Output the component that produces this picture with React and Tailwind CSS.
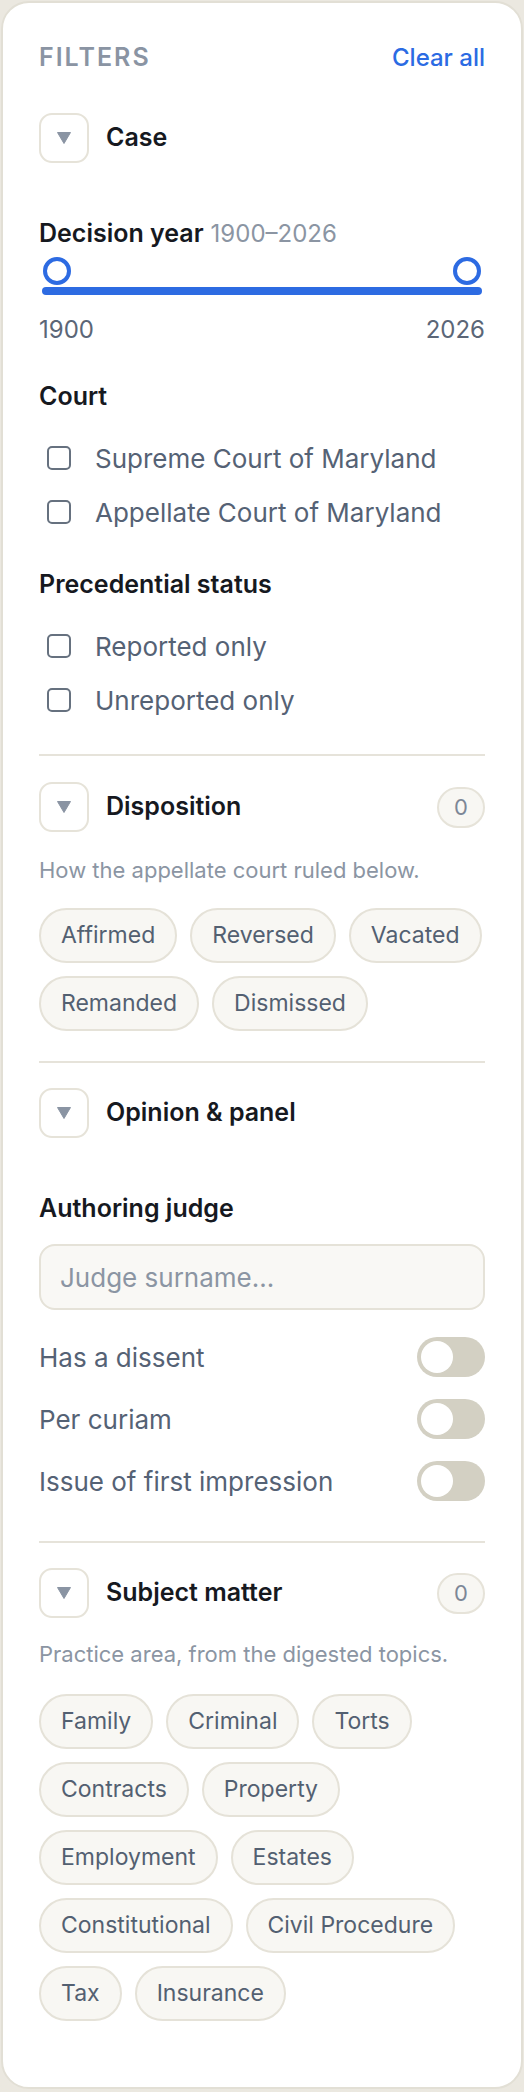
import React from 'react'

const disposition = ['Affirmed', 'Reversed', 'Vacated', 'Remanded', 'Dismissed']
const subjects = ['Family', 'Criminal', 'Torts', 'Contracts', 'Property', 'Employment', 'Estates', 'Constitutional', 'Civil Procedure', 'Tax', 'Insurance']

const Caret = () => (
    <div className="w-[50px] h-[50px] shrink-0 rounded-[13px] border-2 border-[#e6e3d9] flex items-center justify-center">
        <svg width="14" height="12" viewBox="0 0 14 12">
            <polygon points="0.5,0.5 13.5,0.5 7,11.5" fill="#8a94a3" stroke="#8a94a3" strokeLinejoin="round" />
        </svg>
    </div>
)

const SectionHead = ({ title, count }) => (
    <div className="flex items-center h-[50px]">
        <Caret />
        <span className="ml-[17px] text-[25px] font-semibold text-[#16191f]">{title}</span>
        {count !== undefined && (
            <span className="ml-auto w-[48px] h-[41px] rounded-full border-2 border-[#e6e3d9] bg-[#f8f7f3] flex items-center justify-center text-[22px] text-[#7d8797]">
                {count}
            </span>
        )}
    </div>
)

const Check = ({ label }) => (
    <label className="flex items-center h-[40px]">
        <span className="ml-2 w-6 h-6 rounded-[5px] border-2 border-[#66717f]" />
        <span className="ml-6 text-[26px] text-[#556275]">{label}</span>
    </label>
)

const Chips = ({ items }) => (
    <div className="flex flex-wrap gap-x-[13px] gap-y-[13px]">
        {items.map((c) => (
            <span key={c} className="h-[55px] px-[20px] rounded-full border-2 border-[#e5e2d8] bg-[#f8f7f3] flex items-center text-[23px] text-[#536071]">
                {c}
            </span>
        ))}
    </div>
)

const Toggle = ({ label }) => (
    <div className="flex items-center justify-between h-[40px]">
        <span className="text-[26px] text-[#556275]">{label}</span>
        <span className="w-[68px] h-[40px] rounded-full bg-[#d3d0c3] p-[4px] flex">
            <span className="w-8 h-8 rounded-full bg-white" />
        </span>
    </div>
)

const Heading = ({ children }) => (
    <div className="leading-[32px] text-[25px] font-semibold text-[#16191f]">{children}</div>
)

export default function App() {
    return (
        <div className="min-h-screen bg-[#ebe8e0] px-[1px] pt-[1px] pb-[3px] font-['Inter',sans-serif]">
            <div className="rounded-[28px] border-2 border-[#e2dfd5] bg-white px-[36px] pt-[39px] pb-[66px]">
                <div className="flex items-center justify-between h-[32px]">
                    <span className="text-[25px] font-semibold tracking-[0.08em] text-[#8a94a3]">FILTERS</span>
                    <button className="text-[24px] font-medium text-[#2b6be3]">Clear all</button>
                </div>

                <div className="mt-[39px]">
                    <SectionHead title="Case" />
                </div>

                <div className="mt-[54px] leading-[32px] text-[25px]">
                    <span className="font-semibold text-[#16191f]">Decision year</span>
                    <span className="ml-[7px] text-[24px] text-[#8b95a3]">1900–2026</span>
                </div>
                <div className="mt-[7px] px-[3px]">
                    <div className="flex justify-between h-[28px] px-[1px]">
                        <span className="w-[28px] h-[28px] rounded-full border-4 border-[#2d6be2] bg-white" />
                        <span className="w-[28px] h-[28px] rounded-full border-4 border-[#2d6be2] bg-white" />
                    </div>
                    <div className="mt-[2px] h-[8px] rounded-full bg-[#2d6be2]" />
                </div>
                <div className="mt-[19px] flex justify-between leading-[32px] text-[24px] text-[#5b6677]">
                    <span>1900</span>
                    <span>2026</span>
                </div>

                <div className="mt-[34px]">
                    <Heading>Court</Heading>
                </div>
                <div className="mt-[26px] flex flex-col gap-[14px]">
                    <Check label="Supreme Court of Maryland" />
                    <Check label="Appellate Court of Maryland" />
                </div>

                <div className="mt-[36px]">
                    <Heading>Precedential status</Heading>
                </div>
                <div className="mt-[26px] flex flex-col gap-[14px]">
                    <Check label="Reported only" />
                    <Check label="Unreported only" />
                </div>

                <div className="mt-[34px] h-[2px] bg-[#e6e3da]" />
                <div className="mt-[26px]">
                    <SectionHead title="Disposition" count={0} />
                </div>
                <p className="mt-[23px] leading-[30px] text-[22px] text-[#8b95a3]">How the appellate court ruled below.</p>
                <div className="mt-[23px]">
                    <Chips items={disposition} />
                </div>

                <div className="mt-[30px] h-[2px] bg-[#e6e3da]" />
                <div className="mt-[25px]">
                    <SectionHead title="Opinion & panel" />
                </div>
                <div className="mt-[54px]">
                    <Heading>Authoring judge</Heading>
                </div>
                <input
                    placeholder="Judge surname..."
                    className="mt-[20px] w-full h-[66px] rounded-[16px] border-2 border-[#e5e2d8] bg-[#f9f8f5] px-[19px] text-[26px] text-[#556275] placeholder:text-[#8b95a3] outline-none"
                />
                <div className="mt-[27px] flex flex-col gap-[22px]">
                    <Toggle label="Has a dissent" />
                    <Toggle label="Per curiam" />
                    <Toggle label="Issue of first impression" />
                </div>

                <div className="mt-[40px] h-[2px] bg-[#e6e3da]" />
                <div className="mt-[25px]">
                    <SectionHead title="Subject matter" count={0} />
                </div>
                <p className="mt-[21px] leading-[30px] text-[22px] text-[#8b95a3]">Practice area, from the digested topics.</p>
                <div className="mt-[25px]">
                    <Chips items={subjects} />
                </div>
            </div>
        </div>
    )
}
